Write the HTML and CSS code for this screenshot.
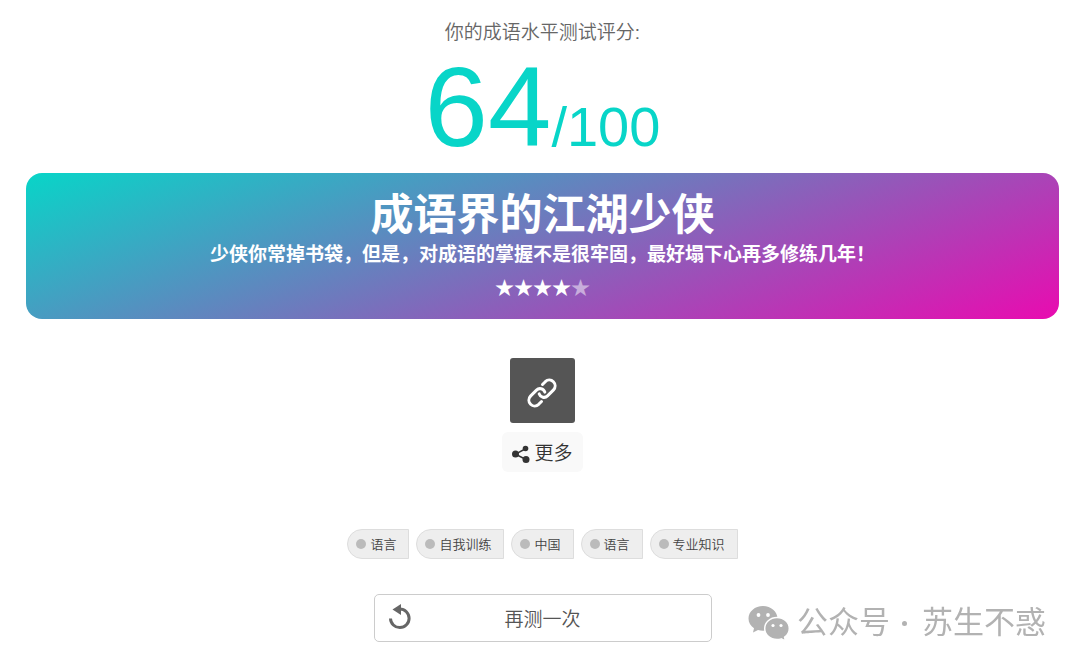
FILE: index.html
```html
<!DOCTYPE html>
<html lang="zh-CN">
<head>
  <meta charset="UTF-8">
  <meta name="viewport" content="width=device-width, initial-scale=1.0">
  <title>成语水平测试</title>
  <link rel="stylesheet" href="styles.css">
</head>
<body>
  <main class="result">
    <p class="result-label">你的成语水平测试评分:</p>
    <div class="score">64<span class="score-total">/100</span></div>

    <div class="banner">
      <h1 class="banner-title">成语界的江湖少侠</h1>
      <p class="banner-desc">少侠你常掉书袋，但是，对成语的掌握不是很牢固，最好塌下心再多修练几年！</p>
      <div class="stars">★★★★<span class="star-off">★</span></div>
    </div>

    <div class="share">
      <button class="share-link" type="button" aria-label="复制链接">
        <svg width="32" height="32" viewBox="0 0 32 32" fill="none" stroke="#fff" stroke-width="3" stroke-linecap="round">
          <path d="M16.5 7.500l2.800-2.800a5.800 5.800 0 0 1 8.200 8.200l-6 6c-2.600 2.600-7 1.600-8.300-2"/>
          <path d="M15.500 24.500l-2.800 2.800a5.800 5.800 0 0 1-8.200-8.200l6-6c2.600-2.600 7-1.600 8.300 2"/>
        </svg>
      </button>
      <button class="share-more" type="button">
        <svg width="18" height="18" viewBox="0 0 18 18" fill="#333">
          <path d="M14 3.5L3.5 9.2L14 14.5" fill="none" stroke="#333" stroke-width="1.5"/>
          <circle cx="13.5" cy="3.5" r="2.800"/>
          <circle cx="3.5" cy="9" r="3.500"/>
          <circle cx="14" cy="14.5" r="3.500"/>
        </svg>
        <span>更多</span>
      </button>
    </div>

    <div class="tags">
      <a class="tag" href="#">语言</a>
      <a class="tag" href="#">自我训练</a>
      <a class="tag" href="#">中国</a>
      <a class="tag" href="#">语言</a>
      <a class="tag" href="#">专业知识</a>
    </div>

    <button class="retry" type="button">
      <svg class="retry-icon" width="22" height="26" viewBox="0 0 22 26">
        <path d="M1.5 14.5a9.3 9.3 0 1 0 9.3-9.5" fill="none" stroke="#666" stroke-width="3"/>
        <path d="M3.5 5.5L12 0v11z" fill="#666"/>
      </svg>
      再测一次
    </button>
  </main>

  <div class="watermark">
    <svg width="42" height="36" viewBox="0 0 42 36">
      <path d="M15 1C6.900 1 .5 6.500.5 13.500c0 4 2.100 7.400 5.500 9.700L5 27.500l5-2.500c1.600.5 3.300.8 5 .8 8 0 14.500-5.400 14.500-12.300S23 1 15 1z" fill="#b2b2b2"/>
      <path d="M29 12.500c-6.900 0-12.300 4.900-12.300 11s5.400 11 12.300 11c1.500 0 2.900-.2 4.200-.6l4.300 2-.9-3.700c2.900-2.100 4.700-5.200 4.700-8.700 0-6.100-5.400-11-12.300-11z" fill="#b2b2b2" stroke="#fff" stroke-width="1.500"/>
      <g fill="#fff">
        <circle cx="10.500" cy="10" r="1.900"/>
        <circle cx="20" cy="10" r="1.900"/>
        <circle cx="25" cy="20.500" r="1.600"/>
        <circle cx="33" cy="20.500" r="1.600"/>
      </g>
    </svg>
    <span>公众号</span>
    <span class="watermark-dot"></span>
    <span>苏生不惑</span>
  </div>
</body>
</html>
```
FILE: styles.css
```css
body {
  margin: 0;
  background: #fff;
  color: #666;
  font-family: "Liberation Sans", "Noto Sans CJK SC", sans-serif;
  font-size: 19px;
  font-weight: 350;
}

p, h1 {
  margin: 0;
}

button {
  border: none;
  padding: 0;
  font: inherit;
  cursor: pointer;
}

.result {
  display: flex;
  flex-direction: column;
  align-items: center;
  padding: 21px 21px 24px 26px;
}

.result-label {
  line-height: 24px;
}

.score {
  margin: 5px 0 9px;
  color: #08d5c8;
  font-size: 114px;
  line-height: 1;
}

.score-total {
  font-size: 56px;
  line-height: 1;
}

.banner {
  align-self: stretch;
  padding: 16px 20px 18px;
  border-radius: 16px;
  background: linear-gradient(160deg, #08d5c8, #e90bb0);
  color: #fff;
  font-weight: bold;
  text-align: center;
}

.banner-title {
  font-size: 43px;
  line-height: 52px;
}

.banner-desc {
  line-height: 28px;
}

.stars {
  margin-top: 4px;
  font-family: "Noto Sans CJK SC", sans-serif;
  font-weight: normal;
  line-height: 28px;
}

.star-off {
  opacity: .5;
}

.share {
  display: flex;
  flex-direction: column;
  align-items: center;
  gap: 9px;
  margin-top: 39px;
}

.share-link {
  display: flex;
  align-items: center;
  justify-content: center;
  width: 65px;
  height: 65px;
  padding-top: 4px;
  border-radius: 3px;
  background: #555;
}

.share-more {
  display: flex;
  align-items: center;
  gap: 4px;
  height: 40px;
  padding: 0 10px 2px;
  border-radius: 6px;
  background: #f9f9f9;
  color: #333;
}

.share-more svg {
  margin-top: 5px;
}

.tags {
  display: flex;
  flex-wrap: wrap;
  justify-content: center;
  gap: 7px;
  margin-top: 57px;
}

.tag {
  display: flex;
  align-items: center;
  gap: 4px;
  box-sizing: border-box;
  height: 30px;
  padding: 0 12px 1px 8px;
  border: 1px solid #ddd;
  border-radius: 15px 0 0 15px;
  background: #eee;
  color: #444;
  font-size: 13px;
  text-decoration: none;
}

.tag::before {
  content: "";
  width: 10px;
  height: 10px;
  border-radius: 50%;
  background: #bbb;
}

.retry {
  position: relative;
  width: 338px;
  max-width: 100%;
  height: 48px;
  margin-top: 35px;
  padding-bottom: 2px;
  border: 1px solid #ccc;
  border-radius: 5px;
  background: #fff;
  color: #555;
}

.retry-icon {
  position: absolute;
  top: 9px;
  left: 14px;
}

.watermark {
  position: fixed;
  right: 34px;
  bottom: 23px;
  display: flex;
  align-items: center;
  color: #b2b2b2;
  font-size: 31px;
  font-weight: normal;
  line-height: 40px;
}

.watermark svg {
  margin-right: 7px;
}

.watermark-dot {
  width: 5px;
  height: 5px;
  margin: 0 15px 0 12px;
  border-radius: 50%;
  background: #b2b2b2;
}
```
